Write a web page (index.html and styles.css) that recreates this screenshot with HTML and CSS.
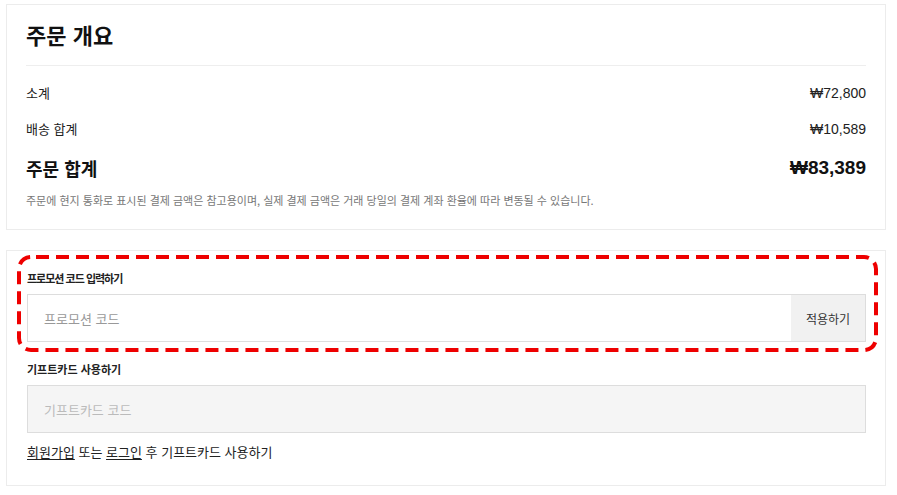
FILE: index.html
```html
<!DOCTYPE html>
<html lang="ko">
<head>
<meta charset="utf-8">
<title>주문 개요</title>
<link rel="stylesheet" href="styles.css">
</head>
<body>
<div class="page">
  <section class="card summary">
    <h2 class="title">주문 개요</h2>
    <div class="rows">
      <div class="row">
        <span class="label">소계</span>
        <span class="amount">₩72,800</span>
      </div>
      <div class="row">
        <span class="label">배송 합계</span>
        <span class="amount">₩10,589</span>
      </div>
      <div class="row total">
        <span class="label">주문 합계</span>
        <span class="amount">₩83,389</span>
      </div>
    </div>
    <p class="note">주문에 현지 통화로 표시된 결제 금액은 참고용이며, 실제 결제 금액은 거래 당일의 결제 계좌 환율에 따라 변동될 수 있습니다.</p>
  </section>

  <section class="card codes">
    <div class="field promo">
      <div class="field-label field-label-tight">프로모션 코드 입력하기</div>
      <div class="input-group">
        <div class="input">프로모션 코드</div>
        <div class="apply">적용하기</div>
      </div>
    </div>
    <div class="field gift">
      <div class="field-label">기프트카드 사용하기</div>
      <div class="input disabled">기프트카드 코드</div>
    </div>
    <p class="login"><a class="link" href="#">회원가입</a> 또는 <a class="link" href="#">로그인</a> 후 기프트카드 사용하기</p>
    <svg class="highlight" width="865" height="101" viewBox="0 0 865 101" aria-hidden="true">
      <rect x="4" y="4" width="857" height="93" rx="12" ry="12" fill="none" stroke="#ee0000" stroke-width="4" stroke-dasharray="13 7" stroke-dashoffset="15"/>
    </svg>
  </section>
</div>
</body>
</html>
```

FILE: styles.css
```css
* { box-sizing: border-box; }

html, body {
  margin: 0;
  padding: 0;
  background: #ffffff;
}

body {
  font-family: "Noto Sans CJK KR", "Liberation Sans", sans-serif;
  color: #222222;
}

.page {
  padding: 4px 11px 0 6px;
  display: flex;
  flex-direction: column;
  gap: 20px;
}

.card {
  border: 1px solid #ececec;
  background: #ffffff;
  padding: 0 19px 0 19px;
}

/* summary card */
.summary {
  padding-top: 14px;
  padding-bottom: 21px;
}

.title {
  margin: 0;
  font-size: 22px;
  font-weight: 700;
  line-height: 30px;
  color: #111111;
  padding-bottom: 16px;
  border-bottom: 1px solid #eeeeee;
}

.rows {
  display: flex;
  flex-direction: column;
  gap: 16px;
  padding-top: 17px;
}

.row {
  display: flex;
  justify-content: space-between;
  align-items: center;
  line-height: 20px;
}

.label {
  font-size: 13px;
  color: #222222;
}

.amount {
  font-family: "Liberation Sans", "Noto Sans CJK KR", sans-serif;
  font-size: 14px;
  color: #222222;
}

.row.total {
  line-height: 26px;
}

.row.total .label {
  font-size: 18px;
  font-weight: 700;
  color: #111111;
}

.row.total .amount {
  font-size: 19px;
  font-weight: 700;
  color: #111111;
}

.note {
  margin: 11px 0 0;
  font-size: 11px;
  line-height: 16px;
  color: #777777;
}

/* codes card */
.codes {
  position: relative;
  padding-top: 19px;
  padding-bottom: 23px;
  padding-left: 20px;
}

.field-label {
  font-size: 11px;
  font-weight: 700;
  line-height: 16px;
  color: #222222;
  margin-bottom: 8px;
}

.field-label-tight {
  letter-spacing: -1px;
}

.gift {
  margin-top: 19px;
}

.input-group {
  display: flex;
  height: 48px;
  border: 1px solid #dddddd;
  background: #ffffff;
}

.input-group .input {
  flex: 1;
  border: none;
  height: auto;
}

.input {
  display: flex;
  align-items: center;
  height: 48px;
  padding-left: 16px;
  font-size: 13px;
  color: #999999;
  border: 1px solid #dddddd;
  background: #ffffff;
}

.input.disabled {
  background: #f5f5f5;
  color: #bbbbbb;
}

.apply {
  width: 74px;
  display: flex;
  align-items: center;
  justify-content: center;
  background: #f1f1f1;
  font-size: 12px;
  color: #333333;
}

.login {
  margin: 9px 0 0;
  font-size: 13px;
  line-height: 20px;
  color: #222222;
}

.link {
  color: #222222;
  text-decoration: underline;
  text-underline-offset: 2px;
}

.highlight {
  position: absolute;
  left: 8px;
  top: 2px;
  pointer-events: none;
}
```
